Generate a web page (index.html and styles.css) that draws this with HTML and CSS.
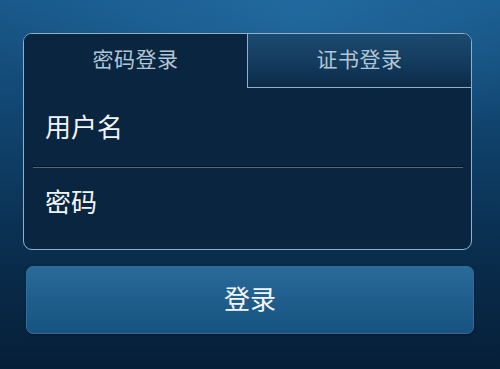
FILE: index.html
```html
<!DOCTYPE html>
<html lang="zh-CN">
<head>
    <meta charset="UTF-8">
    <meta name="viewport" content="width=device-width, initial-scale=1.0">
    <title>登录</title>
    <link rel="stylesheet" href="styles.css">
</head>
<body>
    <div class="login-box">
        <div class="tabs">
            <div class="tab active">密码登录</div>
            <div class="tab">证书登录</div>
        </div>
        <div class="field">用户名</div>
        <div class="divider"></div>
        <div class="field field-last">密码</div>
    </div>

    <button class="login-btn">登录</button>
</body>
</html>
```

FILE: styles.css
```css
body {
    margin: 0;
    width: 500px;
    height: 369px;
    overflow: hidden;
    font-family: "Noto Sans CJK SC", "Noto Sans", sans-serif;
    background:
        radial-gradient(ellipse 320px 140px at 300px 10px, rgba(40, 120, 175, 0.55), rgba(40, 120, 175, 0) 100%),
        linear-gradient(to bottom, #19588a 0%, #114671 30%, #0a2f50 65%, #061f38 100%);
}

.login-box {
    margin: 33px 0 0 23px;
    width: 447px;
    height: 215px;
    border: 1.5px solid #8fb0c9;
    border-radius: 9px;
    background-color: #0a2540;
    overflow: hidden;
}

.tabs {
    display: flex;
    height: 54px;
}

.tab {
    flex: 1;
    display: flex;
    align-items: center;
    justify-content: center;
    padding-bottom: 5px;
    font-size: 21px;
    line-height: 1;
    color: #b4c6d3;
    letter-spacing: 0.5px;
}

.tab.active {
    background-color: #0a2540;
}

.tab:not(.active) {
    border-left: 1.5px solid #8fb0c9;
    border-bottom: 1.5px solid #8fb0c9;
    background: linear-gradient(to bottom, #1b4a70 0%, #133b5e 55%, #0c2b47 100%);
}

.field {
    height: 78px;
    display: flex;
    align-items: center;
    padding-left: 21px;
    padding-bottom: 2px;
    box-sizing: border-box;
    font-size: 26px;
    line-height: 1;
    color: #f2f5f7;
}

.field-last {
    height: 82px;
    padding-bottom: 17px;
}

.divider {
    margin: 0 8px 0 9px;
    height: 1px;
    border-top: 1px solid #04111f;
    background-color: #53687a;
}

.login-btn {
    display: block;
    margin: 16px 0 0 26px;
    width: 448px;
    height: 68px;
    padding: 0 0 4px;
    border: 1px solid #2f6d98;
    border-radius: 7px;
    background: linear-gradient(to bottom, #2b6b99 0%, #1f5e8c 50%, #175381 100%);
    box-shadow: 0 1px 2px rgba(0, 0, 0, 0.4);
    color: #f4f7f9;
    font-family: "Noto Sans CJK SC", "Noto Sans", sans-serif;
    font-size: 26px;
    line-height: 1;
    cursor: pointer;
}
```
